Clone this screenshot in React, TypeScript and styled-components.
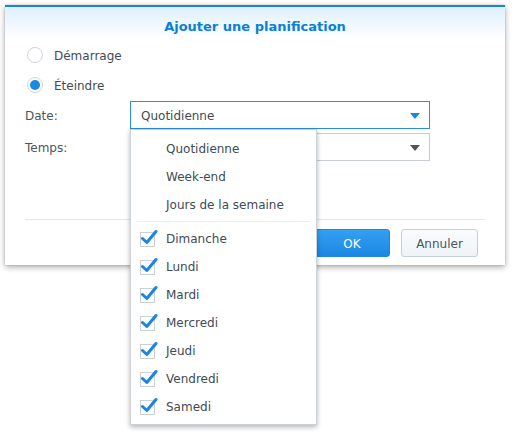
import React, { useState } from "react";
import styled, { createGlobalStyle } from "styled-components";

const GlobalStyle = createGlobalStyle`
  html, body {
    margin: 0;
    padding: 0;
    background: #ffffff;
  }
  body {
    font-family: "DejaVu Sans", Verdana, sans-serif;
    font-size: 12px;
    color: #414b55;
  }
`;

const days = [
  "Dimanche",
  "Lundi",
  "Mardi",
  "Mercredi",
  "Jeudi",
  "Vendredi",
  "Samedi",
];

const presets = ["Quotidienne", "Week-end", "Jours de la semaine"];

const App: React.FC = () => {
  const [mode, setMode] = useState("off");
  const [checked, setChecked] = useState<boolean[]>(days.map(() => true));

  const toggle = (i: number) =>
    setChecked((prev) => prev.map((c, j) => (j === i ? !c : c)));

  return (
    <>
      <GlobalStyle />
      <Page>
        <Dialog>
          <Header>Ajouter une planification</Header>
          <Body>
            <RadioRow onClick={() => setMode("on")}>
              <Radio checked={mode === "on"} />
              <span>Démarrage</span>
            </RadioRow>
            <RadioRow onClick={() => setMode("off")}>
              <Radio checked={mode === "off"} />
              <span>Éteindre</span>
            </RadioRow>
            <FieldRow $first>
              <Label>Date:</Label>
              <SelectBox $focused>
                <span>Quotidienne</span>
                <Arrow $focused />
              </SelectBox>
            </FieldRow>
            <FieldRow>
              <Label>Temps:</Label>
              <SelectBox>
                <span />
                <Arrow />
              </SelectBox>
            </FieldRow>
          </Body>
          <Separator />
          <Footer>
            <Button $primary>OK</Button>
            <Button>Annuler</Button>
          </Footer>

          {/* open dropdown of the Date select */}
          <Menu>
            {presets.map((p) => (
              <MenuItem key={p}>{p}</MenuItem>
            ))}
            <MenuDivider />
            {days.map((d, i) => (
              <MenuItem key={d} onClick={() => toggle(i)}>
                <CheckBox>
                  {checked[i] && (
                    <svg width="18" height="16" viewBox="0 0 18 16">
                      <path
                        d="M2.5 9.5 L6.8 13.5 L16 2.5"
                        fill="none"
                        stroke="#1a85e3"
                        strokeWidth="3"
                        strokeLinecap="round"
                        strokeLinejoin="round"
                      />
                    </svg>
                  )}
                </CheckBox>
                {d}
              </MenuItem>
            ))}
          </Menu>
        </Dialog>
      </Page>
    </>
  );
};

const Page = styled.div`
  padding: 5px;
  width: 531px;
  height: 436px;
  box-sizing: border-box;
`;

const Dialog = styled.div`
  position: relative;
  width: 500px;
  height: 260px;
  box-sizing: border-box;
  background: #ffffff;
  border-top: 2px solid #1a83dc;
  box-shadow: 0 2px 6px rgba(0, 0, 0, 0.35), 0 0 1px rgba(0, 0, 0, 0.25);
  display: flex;
  flex-direction: column;
`;

const Header = styled.div`
  height: 33px;
  padding-top: 6px;
  box-sizing: border-box;
  line-height: 28px;
  text-align: center;
  font-weight: bold;
  font-size: 13px;
  color: #0a7fd8;
  background: linear-gradient(to bottom, #dff0fc 0%, #ffffff 100%);
`;

const Body = styled.div`
  padding: 0 20px;
  display: flex;
  flex-direction: column;
`;

const RadioRow = styled.div`
  height: 30px;
  display: flex;
  align-items: center;
  gap: 11px;
  padding-left: 2px;
  cursor: pointer;
  span:last-child {
    padding-top: 1px;
  }
`;

const Radio = styled.span<{ checked: boolean }>`
  width: 16px;
  height: 16px;
  box-sizing: border-box;
  border-radius: 50%;
  border: 1px solid #cfd5da;
  background: #ffffff;
  display: flex;
  align-items: center;
  justify-content: center;
  &::after {
    content: "";
    width: 10px;
    height: 10px;
    border-radius: 50%;
    background: ${(p) => (p.checked ? "#1a88e6" : "transparent")};
  }
`;

const FieldRow = styled.div<{ $first?: boolean }>`
  display: flex;
  align-items: center;
  margin-top: ${(p) => (p.$first ? "1px" : "4px")};
`;

const Label = styled.div`
  width: 105px;
  color: #4b555e;
  padding-top: 1px;
`;

const SelectBox = styled.div<{ $focused?: boolean }>`
  width: 300px;
  height: 28px;
  box-sizing: border-box;
  border: 1px solid ${(p) => (p.$focused ? "#2b8be0" : "#c8cdd2")};
  display: flex;
  align-items: center;
  justify-content: space-between;
  padding: 1px 9px 0 10px;
  background: #ffffff;
`;

const Arrow = styled.span<{ $focused?: boolean }>`
  width: 0;
  height: 0;
  border-left: 5px solid transparent;
  border-right: 5px solid transparent;
  border-top: 6px solid ${(p) => (p.$focused ? "#1a85e3" : "#50555a")};
`;

const Separator = styled.div`
  margin: 58px 20px 0;
  height: 1px;
  background: #e3e7ea;
`;

const Footer = styled.div`
  display: flex;
  justify-content: flex-end;
  gap: 11px;
  padding: 9px 27px 0 0;
`;

const Button = styled.div<{ $primary?: boolean }>`
  width: ${(p) => (p.$primary ? "76px" : "77px")};
  height: 28px;
  box-sizing: border-box;
  border-radius: 3px;
  display: flex;
  align-items: center;
  justify-content: center;
  padding-top: 1px;
  border: 1px solid ${(p) => (p.$primary ? "#1f85df" : "#c6ced6")};
  background: ${(p) =>
    p.$primary
      ? "linear-gradient(to bottom, #33a0f2, #1c87e3)"
      : "linear-gradient(to bottom, #fafcfe, #eef3f7)"};
  color: ${(p) => (p.$primary ? "#ffffff" : "#4b555e")};
`;

const Menu = styled.div`
  position: absolute;
  left: 125px;
  top: 122px;
  width: 187px;
  height: 296px;
  box-sizing: border-box;
  background: #ffffff;
  border: 1px solid #cdd2d6;
  box-shadow: 0 2px 5px rgba(0, 0, 0, 0.3);
  padding: 5px 0 3px;
`;

const MenuItem = styled.div`
  height: 28px;
  display: flex;
  align-items: center;
  padding-left: 35px;
  position: relative;
  color: #414b55;
  cursor: default;
`;

const MenuDivider = styled.div`
  height: 1px;
  margin: 2px 6px 3px;
  background: #eceff1;
`;

const CheckBox = styled.span`
  position: absolute;
  left: 9px;
  top: 7px;
  width: 15px;
  height: 15px;
  box-sizing: border-box;
  border: 1px solid #c9d0d6;
  background: #ffffff;
  svg {
    position: absolute;
    left: -1px;
    top: -4px;
  }
`;

export default App;
